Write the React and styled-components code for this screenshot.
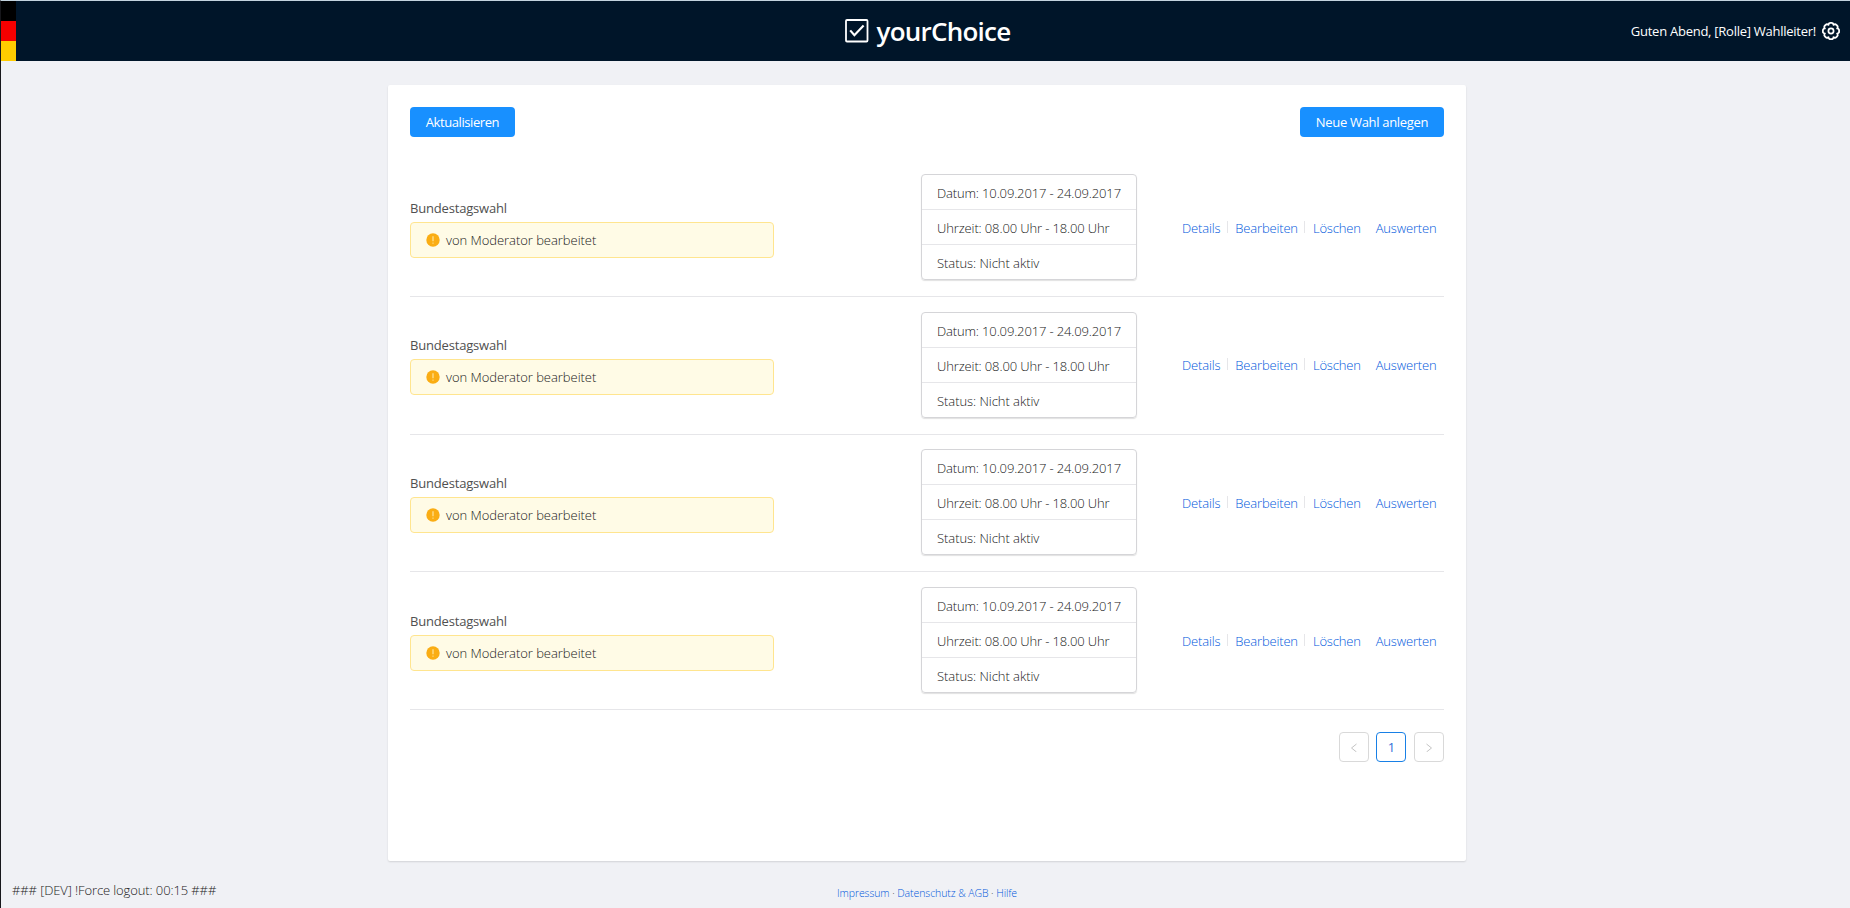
import React from "react";
import styled, { createGlobalStyle } from "styled-components";

const GlobalStyle = createGlobalStyle`
  * { box-sizing: border-box; }
  body {
    margin: 0;
    background: #f0f1f5;
    font-family: "Open Sans", "Noto Sans", sans-serif;
    font-size: 13px;
    line-height: 20px;
    font-weight: 300;
    color: #202020;
  }
  a { text-decoration: none; color: #0058dc; }
`;

const Page = styled.div`
  height: 908px;
  display: flex;
  flex-direction: column;
  border-top: 1px solid #c3d3de;
  border-left: 1px solid #17171b;
  overflow: hidden;
`;

const Header = styled.header`
  height: 60px;
  flex: none;
  display: grid;
  grid-template-columns: 1fr auto 1fr;
  align-items: center;
  background: #001529;
  color: #fff;
`;

const Flag = styled.div`
  width: 15px;
  height: 60px;
  display: grid;
  grid-template-rows: repeat(3, 20px);
`;

const Stripe = styled.span`
  background: ${(p) => p.$color};
`;

const Brand = styled.div`
  display: flex;
  align-items: center;
  gap: 8px;
  padding-left: 4px;
`;

const BrandName = styled.h1`
  margin: 0;
  font-size: 26px;
  line-height: 36px;
  font-weight: 600;
  letter-spacing: -0.76px;
`;

const UserArea = styled.div`
  display: flex;
  align-items: center;
  justify-content: flex-end;
  gap: 6px;
  padding-right: 10px;
  font-weight: 400;
  letter-spacing: -0.26px;
`;

const Card = styled.main`
  width: 1078px;
  height: 776px;
  flex: none;
  margin: 24px 0 0 387px;
  padding: 22px;
  background: #fff;
  border-radius: 2px;
  box-shadow: 0 1px 2px rgba(0, 0, 0, 0.13);
`;

const Toolbar = styled.div`
  display: flex;
  justify-content: space-between;
  margin-bottom: 22.33px;
`;

const Button = styled.button`
  width: ${(p) => p.$width}px;
  height: 30px;
  padding: 0;
  border: 0;
  border-radius: 4px;
  background: #1890ff;
  color: #fff;
  font: 400 13px/30px "Open Sans", "Noto Sans", sans-serif;
  letter-spacing: ${(p) => p.$tracking}px;
  white-space: nowrap;
`;

const List = styled.ul`
  margin: 0;
  padding: 0;
  list-style: none;
`;

const Item = styled.li`
  height: 137.67px;
  display: flex;
  align-items: center;
  border-bottom: 1px solid #e6e6e9;
`;

const Summary = styled.div`
  width: 364px;
  margin-right: 147px;
`;

const ItemTitle = styled.h4`
  margin: 0 0 4px;
  font-size: 13px;
  line-height: 20px;
  font-weight: 400;
  letter-spacing: -0.18px;
  color: #505050;
`;

const Alert = styled.div`
  height: 36px;
  display: flex;
  align-items: center;
  gap: 6px;
  padding: 0 15px;
  border: 1px solid #ffe58f;
  border-radius: 4px;
  background: #fffbe6;
  letter-spacing: -0.04px;
`;

const InfoBox = styled.div`
  width: 216px;
  flex: none;
  margin-top: -1px;
  border: 1px solid #d5d5d8;
  border-radius: 4px;
  box-shadow: 0 1px 1px rgba(0, 0, 0, 0.12);
`;

const InfoRow = styled.div`
  height: 34px;
  padding: 8px 15px 0;
  white-space: nowrap;
  letter-spacing: ${(p) => p.$tracking}px;
  & + & {
    height: 35px;
    border-top: 1px solid #e6e6e9;
  }
`;

const Actions = styled.div`
  flex: 1;
  display: flex;
  align-items: center;
  justify-content: flex-end;
  padding-right: 7.5px;
`;

const Action = styled.a`
  letter-spacing: -0.17px;
`;

const Divider = styled.span`
  width: 1px;
  height: 12px;
  margin: -2px 7.5px 0 6.5px;
  background: ${(p) => (p.$hidden ? "transparent" : "#e6e6e9")};
`;

const Pagination = styled.nav`
  display: flex;
  justify-content: flex-end;
  gap: 7.6px;
  margin-top: 22px;
`;

const PageButton = styled.button`
  width: 30px;
  height: 30px;
  padding: 0;
  display: flex;
  align-items: center;
  justify-content: center;
  border: 1px solid ${(p) => (p.$active ? "#1880e6" : "#d9d9d9")};
  border-radius: 4px;
  background: #fff;
  color: ${(p) => (p.$active ? "#2f6fd8" : "#c4c4c4")};
  font: 400 13px/28px "Open Sans", "Noto Sans", sans-serif;
`;

const Footer = styled.footer`
  flex: 1;
  display: grid;
  grid-template-columns: 1fr auto 1fr;
  align-items: start;
`;

const LogoutTimer = styled.div`
  padding: 19px 0 0 11px;
  letter-spacing: -0.11px;
`;

const Legal = styled.div`
  padding: 22px 0 0 3px;
  font-size: 10.5px;
  letter-spacing: -0.08px;
`;

const CheckIcon = () => (
  <svg width="24" height="24" viewBox="0 0 24 24" fill="none" stroke="#fff">
    <rect x="1" y="1" width="21.5" height="21.5" rx="1" strokeWidth="1.8" />
    <path d="M5.2 11.4l4.2 4.8L18.6 6.6" strokeWidth="2.2" />
  </svg>
);

const lobes = Array.from({ length: 8 }, (_, i) => {
  const point = (deg, r) => {
    const a = (deg * Math.PI) / 180;
    return `${(9 + r * Math.cos(a)).toFixed(2)} ${(9 + r * Math.sin(a)).toFixed(2)}`;
  };
  const start = i * 45 + 22.5;
  return `${i ? "" : `M${point(start, 6.6)}`}Q${point(start + 7, 8.7)} ${point(start + 22.5, 8.1)}Q${point(start + 38, 8.7)} ${point(start + 45, 6.6)}`;
}).join("");

const GearIcon = () => (
  <svg width="18" height="18" viewBox="0 0 18 18" fill="none" stroke="#fff" overflow="visible">
    <path d={`${lobes}Z`} strokeWidth="1.8" strokeLinejoin="round" />
    <circle cx="9" cy="9" r="2.6" strokeWidth="1.7" />
  </svg>
);

const WarningIcon = () => (
  <svg width="14" height="14" viewBox="0 0 14 14">
    <circle cx="7" cy="7" r="6.7" fill="#faad14" />
    <path d="M7 3.2v5" stroke="#ffe9a8" strokeWidth="1.1" />
    <circle cx="7" cy="10.1" r="0.7" fill="#ffe9a8" />
  </svg>
);

const Arrow = ({ next }) => (
  <svg width="8" height="10" viewBox="0 0 8 10" fill="none" stroke="currentColor">
    <path d={next ? "M1.5 2l5 4-5 4" : "M6.5 2l-5 4 5 4"} />
  </svg>
);

const elections = [1, 2, 3, 4].map((id) => ({
  id,
  title: "Bundestagswahl",
  note: "von Moderator bearbeitet",
  date: "10.09.2017 - 24.09.2017",
  time: "08.00 Uhr - 18.00 Uhr",
  status: "Nicht aktiv",
}));

const Election = ({ item }) => (
  <Item>
    <Summary>
      <ItemTitle>{item.title}</ItemTitle>
      <Alert>
        <WarningIcon />
        <span>{item.note}</span>
      </Alert>
    </Summary>
    <InfoBox>
      <InfoRow $tracking={-0.14}>Datum: {item.date}</InfoRow>
      <InfoRow $tracking={-0.13}>Uhrzeit: {item.time}</InfoRow>
      <InfoRow $tracking={-0.05}>Status: {item.status}</InfoRow>
    </InfoBox>
    <Actions>
      <Action href="#">Details</Action>
      <Divider />
      <Action href="#">Bearbeiten</Action>
      <Divider />
      <Action href="#">Löschen</Action>
      <Divider $hidden />
      <Action href="#">Auswerten</Action>
    </Actions>
  </Item>
);

export default function App() {
  return (
    <Page>
      <GlobalStyle />
      <Header>
        <Flag>
          <Stripe $color="#000" />
          <Stripe $color="#f50000" />
          <Stripe $color="#fc0" />
        </Flag>
        <Brand>
          <CheckIcon />
          <BrandName>yourChoice</BrandName>
        </Brand>
        <UserArea>
          <span>Guten Abend, [Rolle] Wahlleiter!</span>
          <GearIcon />
        </UserArea>
      </Header>
      <Card>
        <Toolbar>
          <Button $width={105} $tracking={-0.42}>Aktualisieren</Button>
          <Button $width={144} $tracking={-0.31}>Neue Wahl anlegen</Button>
        </Toolbar>
        <List>
          {elections.map((item) => (
            <Election key={item.id} item={item} />
          ))}
        </List>
        <Pagination>
          <PageButton><Arrow /></PageButton>
          <PageButton $active>1</PageButton>
          <PageButton><Arrow next /></PageButton>
        </Pagination>
      </Card>
      <Footer>
        <LogoutTimer>### [DEV] !Force logout: 00:15 ###</LogoutTimer>
        <Legal>
          <a href="#">Impressum</a> · <a href="#">Datenschutz &amp; AGB</a> · <a href="#">Hilfe</a>
        </Legal>
      </Footer>
    </Page>
  );
}
